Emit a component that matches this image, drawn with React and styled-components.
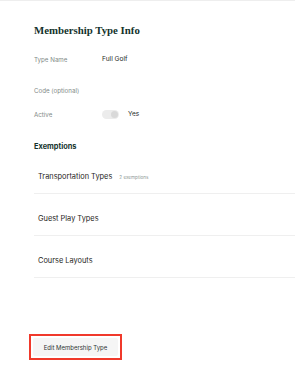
import React from 'react';
import styled, { createGlobalStyle } from 'styled-components';

const GlobalStyle = createGlobalStyle`
  html, body {
    margin: 0;
    padding: 0;
    background: #ffffff;
  }
  body {
    font-family: Inter, "Liberation Sans", sans-serif;
  }
`;

const Page = styled.div`
  border-top: 1px solid #eeeeee;
  min-height: 386px;
  display: flex;
  flex-direction: column;
  padding-left: 34px;
`;

const Title = styled.h1`
  margin: 21px 0 0;
  height: 16px;
  line-height: 16px;
  font-family: "Liberation Serif", serif;
  font-weight: 700;
  font-size: 10.8px;
  color: #13332c;
`;

const Field = styled.div`
  display: flex;
  align-items: center;
  height: 12px;
  margin-top: ${(p) => p.gap}px;
`;

const Label = styled.span`
  width: 68px;
  font-size: 6.2px;
  color: #7f8a87;
`;

const Value = styled.span`
  font-size: 6.6px;
  color: #1f2a27;
`;

const Toggle = styled.span`
  display: inline-flex;
  align-items: center;
  justify-content: flex-end;
  box-sizing: border-box;
  width: 17px;
  height: 9px;
  padding: 1px;
  border-radius: 5px;
  background: #ececec;
  margin-right: 9px;
  &::after {
    content: '';
    width: 7px;
    height: 7px;
    border-radius: 50%;
    background: #d9d9d9;
  }
`;

const SectionTitle = styled.h2`
  margin: 22px 0 0;
  height: 10px;
  line-height: 10px;
  font-size: 7.4px;
  font-weight: 700;
  color: #13332c;
`;

const List = styled.div`
  display: flex;
  flex-direction: column;
`;

const Row = styled.div`
  display: flex;
  align-items: center;
  gap: 7px;
  height: 42px;
  box-sizing: border-box;
  padding: 19px 0 10px 4px;
  border-bottom: 1px solid #efefef;
`;

const RowName = styled.span`
  font-size: 7.4px;
  line-height: 12px;
  color: #1f2523;
`;

const RowMeta = styled.span`
  font-size: 4.6px;
  color: #8e9996;
`;

const Actions = styled.div`
  margin-top: 56px;
  margin-left: -5px;
  align-self: flex-start;
  border: 2px solid #f0392b;
  padding: 2px;
`;

const Button = styled.button`
  display: block;
  width: 85px;
  height: 18px;
  border: none;
  border-radius: 2px;
  background: #f5f5f5;
  font-family: Inter, "Liberation Sans", sans-serif;
  font-size: 6px;
  color: #2e3634;
  padding: 0;
`;

const fields = [
  { label: 'Type Name', value: 'Full Golf', gap: 15 },
  { label: 'Code (optional)', value: '', gap: 19 },
];

const exemptions = [
  { name: 'Transportation Types', meta: '2 exemptions' },
  { name: 'Guest Play Types' },
  { name: 'Course Layouts' },
];

const App = () => {
  return (
    <>
      <GlobalStyle />
      <Page>
        <Title>Membership Type Info</Title>
        {fields.map((f) => (
          <Field key={f.label} gap={f.gap}>
            <Label>{f.label}</Label>
            <Value>{f.value}</Value>
          </Field>
        ))}
        <Field gap={12}>
          <Label>Active</Label>
          <Toggle />
          <Value>Yes</Value>
        </Field>
        <SectionTitle>Exemptions</SectionTitle>
        <List>
          {exemptions.map((e) => (
            <Row key={e.name}>
              <RowName>{e.name}</RowName>
              {e.meta && <RowMeta>{e.meta}</RowMeta>}
            </Row>
          ))}
        </List>
        <Actions>
          <Button>Edit Membership Type</Button>
        </Actions>
      </Page>
    </>
  );
};

export default App;
